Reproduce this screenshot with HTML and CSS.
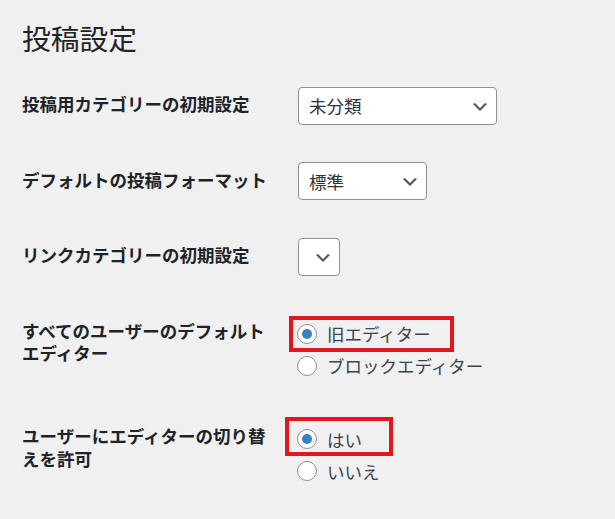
FILE: index.html
```html
<!DOCTYPE html>
<html lang="ja">
<head>
<meta charset="utf-8">
<title>投稿設定</title>
<link rel="stylesheet" href="styles.css">
</head>
<body>
<div class="wrap">
  <h1 class="title">投稿設定</h1>
  <div class="form">
    <div class="row">
      <div class="th">投稿用カテゴリーの初期設定</div>
      <div class="td">
        <div class="select w-cat"><span class="val">未分類</span><svg class="chev" viewBox="0 0 20 20" width="20" height="20"><path d="M5 6l5 5 5-5 2 1-7 7-7-7 2-1z" fill="#50575e"/></svg></div>
      </div>
    </div>
    <div class="row">
      <div class="th">デフォルトの投稿フォーマット</div>
      <div class="td">
        <div class="select w-fmt"><span class="val">標準</span><svg class="chev" viewBox="0 0 20 20" width="20" height="20"><path d="M5 6l5 5 5-5 2 1-7 7-7-7 2-1z" fill="#50575e"/></svg></div>
      </div>
    </div>
    <div class="row">
      <div class="th">リンクカテゴリーの初期設定</div>
      <div class="td">
        <div class="select w-link"><span class="val"></span><svg class="chev" viewBox="0 0 20 20" width="20" height="20"><path d="M5 6l5 5 5-5 2 1-7 7-7-7 2-1z" fill="#50575e"/></svg></div>
      </div>
    </div>
    <div class="row">
      <div class="th">すべてのユーザーのデフォルトエディター</div>
      <div class="td td-radio">
        <div class="option mark mark-a"><span class="radio checked"></span><span class="lbl">旧エディター</span></div>
        <div class="option"><span class="radio"></span><span class="lbl">ブロックエディター</span></div>
      </div>
    </div>
    <div class="row">
      <div class="th">ユーザーにエディターの切り替えを許可</div>
      <div class="td td-radio">
        <div class="option mark mark-b"><span class="radio checked"></span><span class="lbl">はい</span></div>
        <div class="option"><span class="radio"></span><span class="lbl">いいえ</span></div>
      </div>
    </div>
  </div>
</div>
</body>
</html>
```
FILE: styles.css
```css
html, body {
  margin: 0;
  padding: 0;
  background: #f0f0f1;
}
body {
  font-family: "Noto Sans CJK JP", "Noto Sans", sans-serif;
  color: #3c434a;
  width: 615px;
  height: 519px;
  overflow: hidden;
}
.wrap {
  padding-left: 22px;
}
.title {
  margin: 0 0 12px 0;
  padding-top: 19px;
  font-size: 28.75px;
  line-height: 37px;
  font-weight: 400;
  color: #1d2327;
}
.form {
  display: flex;
  flex-direction: column;
}
.row {
  display: flex;
  align-items: flex-start;
}
.th {
  width: 250px;
  flex: none;
  padding: 25px 12.5px 25px 0;
  font-size: 17.5px;
  line-height: 22.75px;
  font-weight: 700;
  color: #1d2327;
}
.td {
  padding: 18.75px 12.5px;
  display: flex;
  flex-direction: column;
  align-items: flex-start;
}
.td-radio {
  padding-top: 23px;
}
.select {
  box-sizing: border-box;
  height: 38px;
  display: flex;
  align-items: center;
  justify-content: space-between;
  background: #fff;
  border: 1px solid #8c8f94;
  border-radius: 4px;
  padding: 0 6px 0 10px;
  margin-left: 1px;
  font-size: 17.5px;
  color: #2c3338;
}
.w-cat { width: 199px; }
.w-fmt { width: 129px; }
.w-link { width: 42px; }
.val {
  line-height: 1;
}
.chev {
  display: block;
  flex: none;
  margin-top: 2px;
}
.option {
  position: relative;
  display: flex;
  align-items: center;
  height: 32px;
  font-size: 17.5px;
  color: #3c434a;
}
.radio {
  box-sizing: border-box;
  width: 20px;
  height: 20px;
  flex: none;
  border-radius: 50%;
  border: 1px solid #8c8f94;
  background: #fff;
  margin-right: 10px;
  display: flex;
  align-items: center;
  justify-content: center;
}
.radio.checked::before {
  content: "";
  width: 10px;
  height: 10px;
  border-radius: 50%;
  background: #3582c4;
}
.mark::after {
  content: "";
  position: absolute;
  border: 4px solid #e3161e;
  pointer-events: none;
}
.mark-a::after {
  top: -2px;
  bottom: -2px;
  left: -8px;
  right: -23px;
}
.mark-b::after {
  top: -6px;
  bottom: -1px;
  left: -12px;
  right: -31px;
}
```
